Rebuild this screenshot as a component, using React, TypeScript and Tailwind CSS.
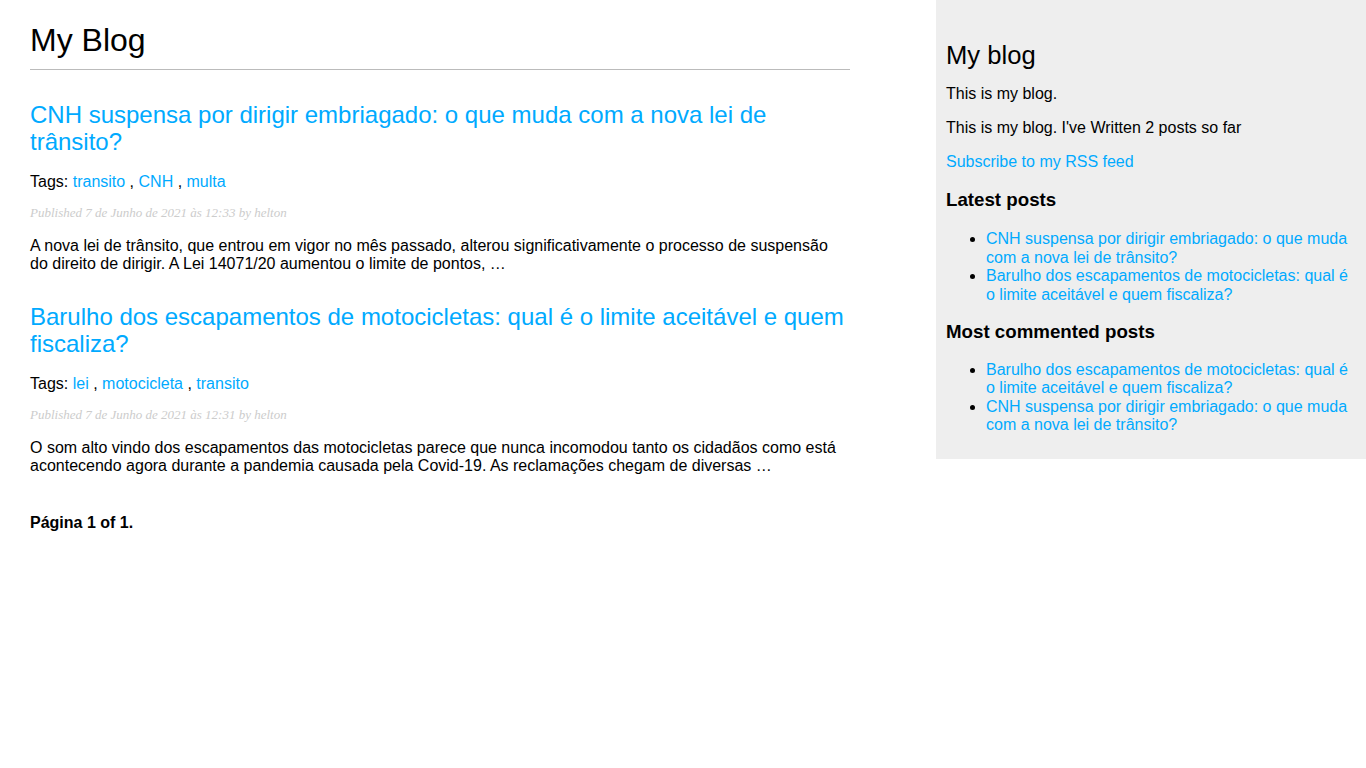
import React from "react";

type Post = {
  title: string;
  tags: string[];
  published: string;
  excerpt: string;
};

const posts: Post[] = [
  {
    title: "CNH suspensa por dirigir embriagado: o que muda com a nova lei de trânsito?",
    tags: ["transito", "CNH", "multa"],
    published: "Published 7 de Junho de 2021 às 12:33 by helton",
    excerpt:
      "A nova lei de trânsito, que entrou em vigor no mês passado, alterou significativamente o processo de suspensão do direito de dirigir. A Lei 14071/20 aumentou o limite de pontos, …",
  },
  {
    title: "Barulho dos escapamentos de motocicletas: qual é o limite aceitável e quem fiscaliza?",
    tags: ["lei", "motocicleta", "transito"],
    published: "Published 7 de Junho de 2021 às 12:31 by helton",
    excerpt:
      "O som alto vindo dos escapamentos das motocicletas parece que nunca incomodou tanto os cidadãos como está acontecendo agora durante a pandemia causada pela Covid-19. As reclamações chegam de diversas …",
  },
];

const latest = [posts[0].title, posts[1].title];
const mostCommented = [posts[1].title, posts[0].title];

const PostItem = ({ post, first }: { post: Post; first: boolean }) => (
  <article className={first ? "mt-[31px]" : "mt-[29px]"}>
    <h2 className="text-[24px] leading-[27.6px] text-[#00aaff]">
      <a href="#">{post.title}</a>
    </h2>
    <p className="mt-[17px] text-[16px] leading-[18.4px]">
      Tags:{" "}
      {post.tags.map((tag, i) => (
        <React.Fragment key={tag}>
          <a href="#" className="text-[#00aaff]">
            {tag}
          </a>
          {i < post.tags.length - 1 && " , "}
        </React.Fragment>
      ))}
    </p>
    <p className="mt-[15px] text-[13px] leading-[14px] italic text-[#cccccc] font-['Liberation_Serif',Georgia,serif]">
      {post.published}
    </p>
    <p className="mt-[16.5px] text-[16px] leading-[18.4px]">{post.excerpt}</p>
  </article>
);

const PostList = ({ items, className }: { items: string[]; className: string }) => (
  <ul className={"list-disc pl-[40px] text-[16px] leading-[18.4px] " + className}>
    {items.map((t) => (
      <li key={t}>
        <a href="#" className="text-[#00aaff]">
          {t}
        </a>
      </li>
    ))}
  </ul>
);

export default function App() {
  return (
    <div className="min-h-screen bg-white text-black font-['Liberation_Sans',Arial,sans-serif] flex">
      <main className="w-[820px] ml-[30px] shrink-0">
        <h1 className="mt-[22px] text-[32px] leading-[36.8px]">My Blog</h1>
        <hr className="mt-[10px] border-0 h-px bg-[#bbbbbb]" />
        {posts.map((p, i) => (
          <PostItem key={p.title} post={p} first={i === 0} />
        ))}
        <p className="mt-[38px] text-[16px] leading-[18.4px] font-bold">Página 1 of 1.</p>
      </main>
      <aside className="ml-[86px] w-[430px] shrink-0 self-start bg-[#eeeeee] px-[10px] pt-[41px] pb-[24px]">
        <h2 className="text-[25.6px] leading-[29.4px]">My blog</h2>
        <p className="mt-[15px] text-[16px] leading-[18.4px]">This is my blog.</p>
        <p className="mt-[15.6px] text-[16px] leading-[18.4px]">This is my blog. I've Written 2 posts so far</p>
        <p className="mt-[15.6px] text-[16px] leading-[18.4px]">
          <a href="#" className="text-[#00aaff]">
            Subscribe to my RSS feed
          </a>
        </p>
        <h3 className="mt-[17px] text-[18.72px] leading-[21.5px] font-bold">Latest posts</h3>
        <PostList items={latest} className="mt-[20px]" />
        <h3 className="mt-[17.5px] text-[18.72px] leading-[21.5px] font-bold">Most commented posts</h3>
        <PostList items={mostCommented} className="mt-[18px]" />
      </aside>
    </div>
  );
}
